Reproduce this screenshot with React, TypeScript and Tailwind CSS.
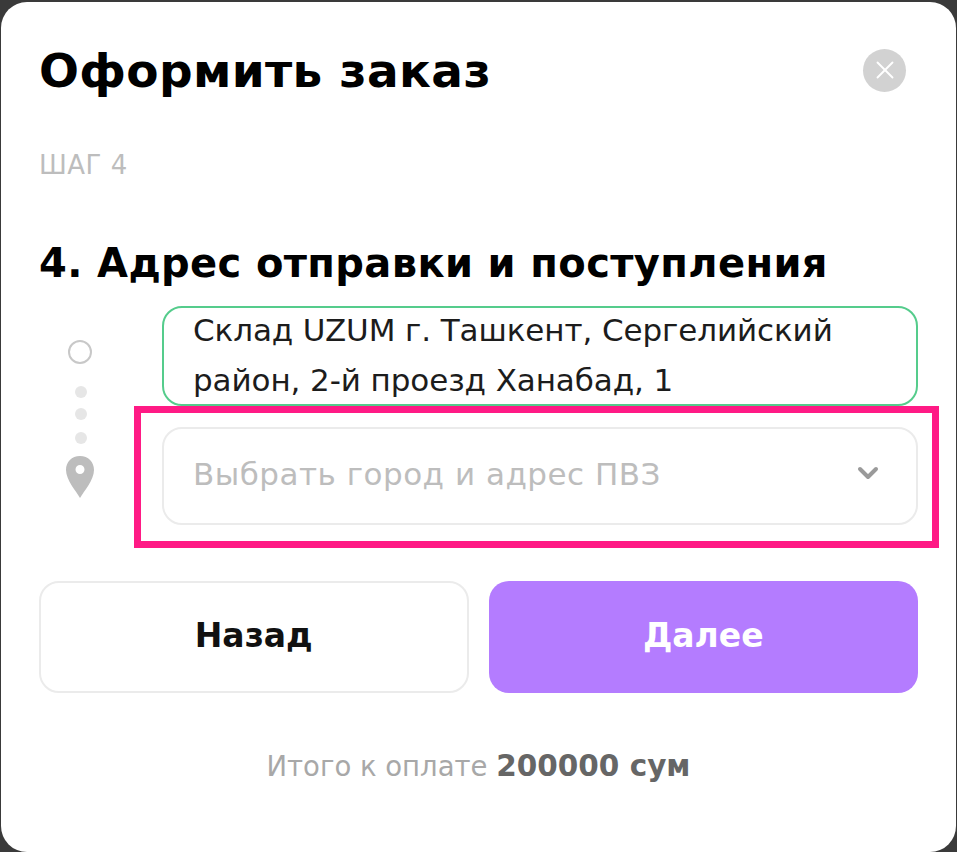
import { X, ChevronDown } from 'lucide-react'

export default function App() {
  return (
    <div className="bg-[#3a3a3a] pt-[2px] px-[1px] overflow-hidden h-[852px]">
      <div className="relative h-[850px] bg-white rounded-[26px] pt-[40px] px-[38px] font-['DejaVu_Sans',sans-serif] text-black">
        <div className="flex items-center justify-between h-[58px]">
          <h1 className="text-[47px] leading-[58px] font-bold tracking-[0.35px] whitespace-nowrap">Оформить заказ</h1>
          <button className="flex items-center justify-center w-[43px] h-[43px] rounded-full bg-[#d2d2d2] text-white mr-[12px] mb-[2px]">
            <X size={30} strokeWidth={1.5} />
          </button>
        </div>

        <p className="mt-[50px] text-[26px] leading-[30px] tracking-[0.5px] text-[#bdbdbd]">ШАГ 4</p>

        <h2 className="mt-[58px] text-[40px] leading-[50px] font-bold tracking-[0.37px] whitespace-nowrap">4. Адрес отправки и поступления</h2>

        <div className="mt-[18px] flex">
          <div className="w-[123px] shrink-0 flex flex-col items-center pr-[42px] pt-[34px]">
            <div className="w-[24px] h-[24px] rounded-full border-2 border-[#c8c8c8]" />
            <div className="w-[12px] h-[12px] rounded-full bg-[#e6e6e6] mt-[22px] ml-[2px]" />
            <div className="w-[12px] h-[12px] rounded-full bg-[#e6e6e6] mt-[10px] ml-[2px]" />
            <div className="w-[12px] h-[12px] rounded-full bg-[#e6e6e6] mt-[12px] ml-[2px]" />
            <svg width="30" height="42" viewBox="0 0 30 42" className="mt-[12px]">
              <path
                fillRule="evenodd"
                d="M15 0C6.7 0 1 6 1 14c0 10 10 21 14 28 4-7 14-18 14-28C29 6 23.3 0 15 0Zm0 9a4.5 4.5 0 1 1 0 9 4.5 4.5 0 0 1 0-9Z"
                fill="#bdbdbd"
              />
            </svg>
          </div>

          <div className="flex-1 flex flex-col">
            <div className="h-[100px] border-2 border-[#55cc8c] rounded-[20px] pl-[29px] pr-[20px] text-[31px] leading-[50px] tracking-[-0.1px] text-[#1c1c1c] whitespace-nowrap overflow-hidden">
              <div className="-mt-[3px]">Склад UZUM г. Ташкент, Сергелийский</div>
              <div>район, 2-й проезд Ханабад, 1</div>
            </div>
            <div className="mt-[21px] h-[98px] border-2 border-[#ebebeb] rounded-[20px] pl-[29px] pr-[32px] pb-[4px] flex items-center justify-between">
              <span className="text-[31px] tracking-[0.5px] text-[#bdbdbd] whitespace-nowrap">Выбрать город и адрес ПВЗ</span>
              <ChevronDown size={32} strokeWidth={3} className="text-[#9a9a9a] mb-[2px]" />
            </div>
          </div>
        </div>

        <div className="mt-[56px] grid grid-cols-2 gap-[20px]">
          <button className="h-[112px] pb-[2px] border-2 border-[#ebebeb] rounded-[20px] text-[33px] font-bold text-[#111]">Назад</button>
          <button className="h-[112px] pb-[2px] bg-[#b47cff] rounded-[20px] text-[33px] font-bold text-white">Далее</button>
        </div>

        <p className="mt-[56px] text-center text-[27.5px] leading-[34px] text-[#a8a8a8] whitespace-nowrap">
          Итого к оплате <span className="font-bold text-[29.5px] text-[#666]">200000 сум</span>
        </p>

        {/* pink annotation over the select */}
        <div className="absolute left-[133px] top-[404px] w-[805px] h-[142px] border-[7px] border-[#ff1a85] pointer-events-none" />
      </div>
    </div>
  )
}
